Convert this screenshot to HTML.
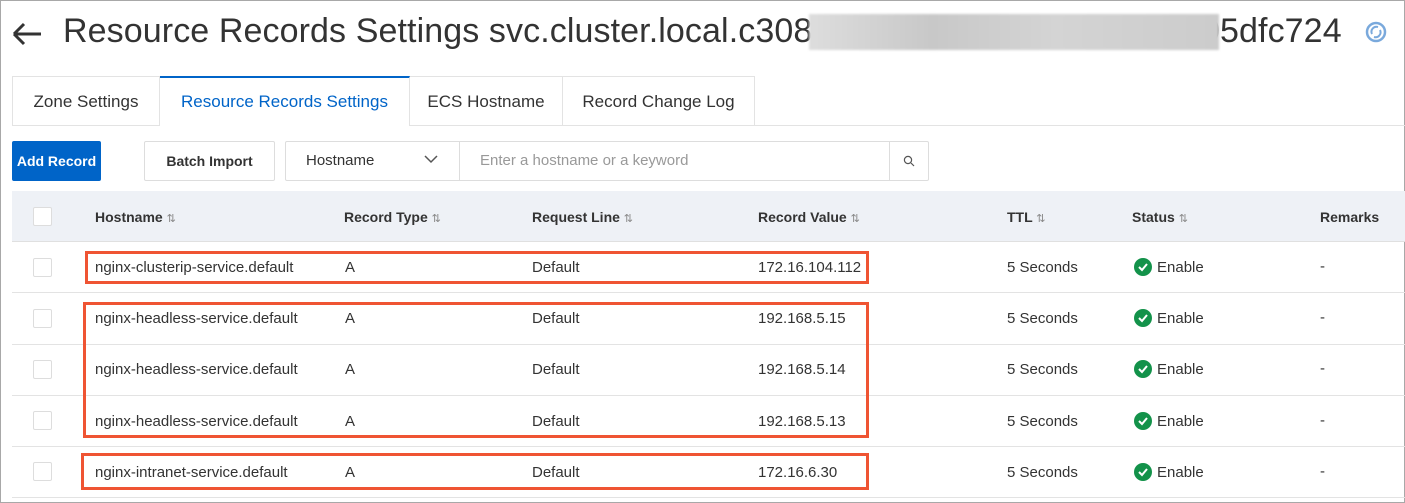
<!DOCTYPE html>
<html><head><meta charset="utf-8"><style>
*{box-sizing:border-box;margin:0;padding:0}
body{width:1405px;height:503px;overflow:hidden;background:#fff;font-family:"Liberation Sans",sans-serif;color:#333;position:relative;border:1px solid #a8a8a8}
.abs{position:absolute}
.title{left:62px;top:11px;font-size:34px;color:#333;white-space:nowrap;letter-spacing:0.1px}
.blur{left:808px;top:13px;width:410px;height:36px;background:linear-gradient(90deg,#ddd,#c8c8c8 30%,#d4d4d4 60%,#ccc);filter:blur(1px)}
.tabs{left:11px;top:75px;height:50px;display:flex}
.tab{border:1px solid #e3e3e3;border-left:none;height:50px;padding:0;text-align:center;font-size:17px;line-height:50px;color:#333;white-space:nowrap}
.tab:first-child{border-left:1px solid #e3e3e3}
.tab.act{color:#0064c8;border-top:2px solid #0064c8;line-height:47px;border-bottom:1px solid #fff}
.line{left:408px;top:124px;width:996px;height:1px;background:#e3e3e3}
.btn{top:140px;height:40px;font-size:14px;line-height:38px;text-align:center;border:1px solid #ddd;border-radius:2px;white-space:nowrap}
.th{top:190px;left:11px;width:1393px;height:51px;background:#eef1f6;border-bottom:1px solid #e0e0e0}
.cell{font-size:15px;white-space:nowrap}
.hd{font-weight:bold;color:#333;font-size:14px}
.cb{width:19px;height:19px;border:1px solid #ddd;border-radius:2px;background:#fff}
.row{left:11px;width:1393px;height:1px;background:#e3e3e3}
.red{border:3px solid #ef5433}
.ok{width:18px;height:18px;border-radius:50%;background:#13924a}
.s{font-size:11px;color:#888;font-weight:normal}
</style></head><body>
<svg class="abs" style="left:10px;top:20px" width="32" height="26" viewBox="0 0 32 26"><path d="M3 13H30M3 13L13 3M3 13L13 23" stroke="#333" stroke-width="3" fill="none"/></svg>
<div class="abs title">Resource Records Settings svc.cluster.local.c308</div>
<div class="abs title" style="left:1200px">05dfc724</div>
<div class="abs blur"></div>
<svg class="abs" style="left:1364px;top:20px" width="22" height="22" viewBox="0 0 22 22"><circle cx="11" cy="11" r="9" fill="none" stroke="#7aa9dc" stroke-width="2.5"/><path d="M13 6A5 5 0 0 0 7 13M9 16A5 5 0 0 0 15 9" stroke="#7aa9dc" stroke-width="2" fill="none"/></svg>
<div class="abs tabs"><div class="tab" style="width:148px">Zone Settings</div><div class="tab act" style="width:250px">Resource Records Settings</div><div class="tab" style="width:153px">ECS Hostname</div><div class="tab" style="width:192px">Record Change Log</div></div>
<div class="abs line"></div>
<div class="abs btn" style="left:11px;width:89px;background:#0064c8;color:#fff;font-weight:bold;border-color:#0064c8">Add Record</div>
<div class="abs btn" style="left:143px;width:131px;font-weight:bold">Batch Import</div>
<div class="abs btn" style="left:284px;width:644px;text-align:left"></div>
<div class="abs cell" style="left:305px;top:151px">Hostname</div>
<svg class="abs" style="left:423px;top:153px" width="14" height="10"><path d="M1 2L7 8L13 2" stroke="#555" stroke-width="1.5" fill="none"/></svg>
<div class="abs" style="left:458px;top:141px;width:1px;height:38px;background:#ddd"></div>
<div class="abs cell" style="left:479px;top:151px;color:#999">Enter a hostname or a keyword</div>
<div class="abs" style="left:888px;top:141px;width:1px;height:38px;background:#ddd"></div>
<svg class="abs" style="left:902px;top:154px" width="12" height="12"><circle cx="5" cy="5" r="3.6" stroke="#555" stroke-width="1.2" fill="none"/><path d="M8 8L11 11" stroke="#555" stroke-width="1.2"/></svg>
<div class="abs th"></div>
<div class="abs cb" style="left:32px;top:206px"></div>
<div class="abs cell hd" style="left:94px;top:208px">Hostname <span class="s">⇅</span></div>
<div class="abs cell hd" style="left:343px;top:208px">Record Type <span class="s">⇅</span></div>
<div class="abs cell hd" style="left:531px;top:208px">Request Line <span class="s">⇅</span></div>
<div class="abs cell hd" style="left:757px;top:208px">Record Value <span class="s">⇅</span></div>
<div class="abs cell hd" style="left:1006px;top:208px">TTL <span class="s">⇅</span></div>
<div class="abs cell hd" style="left:1131px;top:208px">Status <span class="s">⇅</span></div>
<div class="abs cell hd" style="left:1319px;top:208px">Remarks</div>

<div class="abs row" style="top:291px"></div>
<div class="abs row" style="top:343px"></div>
<div class="abs row" style="top:394px"></div>
<div class="abs row" style="top:445px"></div>
<div class="abs row" style="top:496px"></div>

<div class="abs cb" style="left:32px;top:257px"></div>
<div class="abs cell" style="left:94px;top:258px">nginx-clusterip-service.default</div>
<div class="abs cell" style="left:344px;top:258px">A</div><div class="abs cell" style="left:531px;top:258px">Default</div>
<div class="abs cell" style="left:757px;top:258px">172.16.104.112</div><div class="abs cell" style="left:1006px;top:258px">5 Seconds</div>
<div class="abs ok" style="left:1133px;top:257px"></div><div class="abs cell" style="left:1156px;top:258px">Enable</div><div class="abs cell" style="left:1319px;top:257px">-</div>

<div class="abs cb" style="left:32px;top:308px"></div>
<div class="abs cell" style="left:94px;top:309px">nginx-headless-service.default</div>
<div class="abs cell" style="left:344px;top:309px">A</div><div class="abs cell" style="left:531px;top:309px">Default</div>
<div class="abs cell" style="left:757px;top:309px">192.168.5.15</div><div class="abs cell" style="left:1006px;top:309px">5 Seconds</div>
<div class="abs ok" style="left:1133px;top:308px"></div><div class="abs cell" style="left:1156px;top:309px">Enable</div><div class="abs cell" style="left:1319px;top:308px">-</div>

<div class="abs cb" style="left:32px;top:359px"></div>
<div class="abs cell" style="left:94px;top:360px">nginx-headless-service.default</div>
<div class="abs cell" style="left:344px;top:360px">A</div><div class="abs cell" style="left:531px;top:360px">Default</div>
<div class="abs cell" style="left:757px;top:360px">192.168.5.14</div><div class="abs cell" style="left:1006px;top:360px">5 Seconds</div>
<div class="abs ok" style="left:1133px;top:359px"></div><div class="abs cell" style="left:1156px;top:360px">Enable</div><div class="abs cell" style="left:1319px;top:359px">-</div>

<div class="abs cb" style="left:32px;top:410px"></div>
<div class="abs cell" style="left:94px;top:412px">nginx-headless-service.default</div>
<div class="abs cell" style="left:344px;top:412px">A</div><div class="abs cell" style="left:531px;top:412px">Default</div>
<div class="abs cell" style="left:757px;top:412px">192.168.5.13</div><div class="abs cell" style="left:1006px;top:412px">5 Seconds</div>
<div class="abs ok" style="left:1133px;top:411px"></div><div class="abs cell" style="left:1156px;top:412px">Enable</div><div class="abs cell" style="left:1319px;top:411px">-</div>

<div class="abs cb" style="left:32px;top:461px"></div>
<div class="abs cell" style="left:94px;top:463px">nginx-intranet-service.default</div>
<div class="abs cell" style="left:344px;top:463px">A</div><div class="abs cell" style="left:531px;top:463px">Default</div>
<div class="abs cell" style="left:757px;top:463px">172.16.6.30</div><div class="abs cell" style="left:1006px;top:463px">5 Seconds</div>
<div class="abs ok" style="left:1133px;top:462px"></div><div class="abs cell" style="left:1156px;top:463px">Enable</div><div class="abs cell" style="left:1319px;top:462px">-</div>

<svg class="abs" style="left:1133px;top:257px" width="18" height="220"><g stroke="#fff" stroke-width="2" fill="none">
<path d="M5 9L8 12L13 6"/><path transform="translate(0,51)" d="M5 9L8 12L13 6"/><path transform="translate(0,102)" d="M5 9L8 12L13 6"/><path transform="translate(0,154)" d="M5 9L8 12L13 6"/><path transform="translate(0,205)" d="M5 9L8 12L13 6"/></g></svg>

<div class="abs red" style="left:84px;top:250px;width:784px;height:33px"></div>
<div class="abs red" style="left:82px;top:301px;width:786px;height:136px"></div>
<div class="abs red" style="left:80px;top:452px;width:788px;height:37px"></div>
</body></html>
